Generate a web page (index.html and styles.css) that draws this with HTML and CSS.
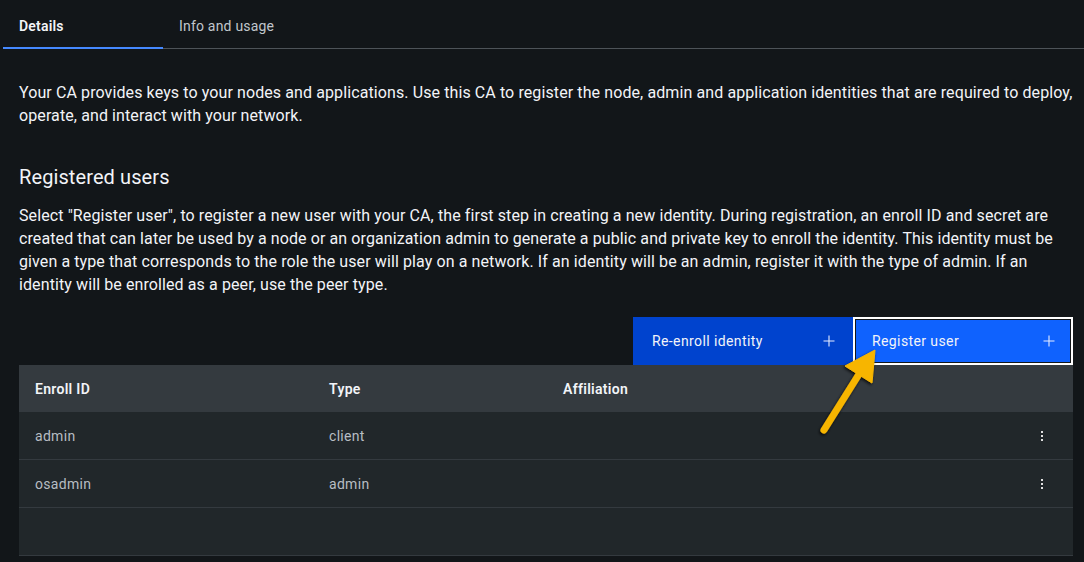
FILE: index.html
```html
<!DOCTYPE html>
<html lang="en">
<head>
<meta charset="utf-8">
<title>CA details</title>
<link rel="stylesheet" href="styles.css">
</head>
<body>
<div class="page">
  <nav class="tabs">
    <div class="tab tab--selected">Details</div>
    <div class="tab">Info and usage</div>
    <div class="tab-rest"></div>
  </nav>

  <main class="content">
    <p class="intro">Your CA provides keys to your nodes and applications. Use this CA to register the node, admin and application identities that are required to deploy, operate, and interact with your network.</p>

    <h2 class="section-title">Registered users</h2>
    <p class="desc">Select "Register user", to register a new user with your CA, the first step in creating a new identity. During registration, an enroll ID and secret are created that can later be used by a node or an organization admin to generate a public and private key to enroll the identity. This identity must be given a type that corresponds to the role the user will play on a network. If an identity will be an admin, register it with the type of admin. If an identity will be enrolled as a peer, use the peer type.</p>

    <div class="toolbar">
      <button class="btn btn--secondary">Re-enroll identity
        <svg class="btn-icon" viewBox="0 0 16 16" width="16" height="16"><path d="M8 2.5v11M2.5 8h11" stroke="currentColor" stroke-width="1.1" fill="none"/></svg>
      </button>
      <button class="btn btn--primary">Register user
        <svg class="btn-icon" viewBox="0 0 16 16" width="16" height="16"><path d="M8 2.5v11M2.5 8h11" stroke="currentColor" stroke-width="1.1" fill="none"/></svg>
      </button>
    </div>

    <div class="table">
      <div class="row row--head">
        <div class="cell c1">Enroll ID</div>
        <div class="cell c2">Type</div>
        <div class="cell c3">Affiliation</div>
        <div class="cell c4"></div>
      </div>
      <div class="row">
        <div class="cell c1">admin</div>
        <div class="cell c2">client</div>
        <div class="cell c3"></div>
        <div class="cell c4"><svg viewBox="0 0 4 12" width="4" height="12"><rect x="1" y="1" width="2" height="2" fill="#e0e0e0"/><rect x="1" y="5" width="2" height="2" fill="#e0e0e0"/><rect x="1" y="9" width="2" height="2" fill="#e0e0e0"/></svg></div>
      </div>
      <div class="row">
        <div class="cell c1">osadmin</div>
        <div class="cell c2">admin</div>
        <div class="cell c3"></div>
        <div class="cell c4"><svg viewBox="0 0 4 12" width="4" height="12"><rect x="1" y="1" width="2" height="2" fill="#e0e0e0"/><rect x="1" y="5" width="2" height="2" fill="#e0e0e0"/><rect x="1" y="9" width="2" height="2" fill="#e0e0e0"/></svg></div>
      </div>
      <div class="row">
        <div class="cell c1"></div>
        <div class="cell c2"></div>
        <div class="cell c3"></div>
        <div class="cell c4"></div>
      </div>
    </div>
  </main>

  <svg class="callout" width="1084" height="562" viewBox="0 0 1084 562">
    <defs>
      <filter id="sh" x="-50%" y="-50%" width="200%" height="200%">
        <feDropShadow dx="-1" dy="1.5" stdDeviation="1.5" flood-color="#000" flood-opacity="0.8"/>
      </filter>
    </defs>
    <g filter="url(#sh)" fill="#f7b500" stroke="#f7b500">
      <path d="M824 430 L861 371" stroke-width="7" stroke-linecap="round" fill="none"/>
      <path d="M875 350 L845 366 L872 383 Z" stroke-width="1" stroke-linejoin="round"/>
    </g>
  </svg>
</div>
</body>
</html>
```
FILE: styles.css
```css
* { box-sizing: border-box; }
html, body { margin: 0; padding: 0; }
body {
  background: #121619;
  color: #f2f4f8;
  font-family: Roboto, "Liberation Sans", sans-serif;
  width: 1084px;
  height: 562px;
  overflow: hidden;
}
.page { position: relative; width: 1084px; height: 562px; }

.tabs {
  display: flex;
  padding-left: 3px;
  height: 49px;
}
.tab {
  width: 160px;
  padding: 4px 16px 0;
  font-size: 14px;
  letter-spacing: 0.2px;
  color: #c1c7cd;
  display: flex;
  align-items: center;
  height: 49px;
  border-bottom: 1px solid #4d5358;
}
.tab--selected {
  color: #f2f4f8;
  font-weight: 600;
  border-bottom: 2px solid #4589ff;
  padding-top: 5px;
}
.tab-rest { flex: 1; border-bottom: 1px solid #4d5358; }

.content { padding: 0 11px 0 19px; }

.intro {
  margin: 32px 0 0;
  font-size: 16px;
  line-height: 23px;
  letter-spacing: 0.1px;
}
.section-title {
  margin: 36px 0 0;
  font-size: 20px;
  font-weight: 400;
  line-height: 28px;
  letter-spacing: 0.1px;
}
.desc {
  margin: 13px 0 0;
  font-size: 16px;
  line-height: 23px;
  letter-spacing: 0.1px;
}

.toolbar {
  display: flex;
  justify-content: flex-end;
  margin-top: 21px;
}
.btn {
  width: 220px;
  height: 48px;
  border: 0;
  padding: 0 16px 0 19px;
  display: flex;
  align-items: center;
  justify-content: space-between;
  font-family: inherit;
  font-size: 14px;
  letter-spacing: 0.4px;
  color: #f2f4f8;
  cursor: pointer;
}
.btn--secondary { background: #0043ce; }
.btn--primary {
  background: #0f62fe;
  box-shadow: inset 0 0 0 2px #ffffff, inset 0 0 0 3px #121619;
}
.btn-icon { flex: none; color: #e6ecff; }

.table { background: #21272a; }
.row {
  display: flex;
  height: 48px;
  border-bottom: 1px solid #343a3f;
  font-size: 14px;
  letter-spacing: 0.3px;
  color: #b7bdc3;
}
.row--head {
  background: #343a3f;
  height: 47px;
  border-bottom: 0;
  color: #f2f4f8;
  font-weight: 600;
}
.cell { display: flex; align-items: center; padding-left: 16px; }
.c1 { width: 294px; }
.c2 { width: 234px; }
.c3 { flex: 1; }
.c4 { width: 48px; padding-left: 0; justify-content: center; padding-right: 14px; }

.callout { position: absolute; left: 0; top: 0; pointer-events: none; }
```
